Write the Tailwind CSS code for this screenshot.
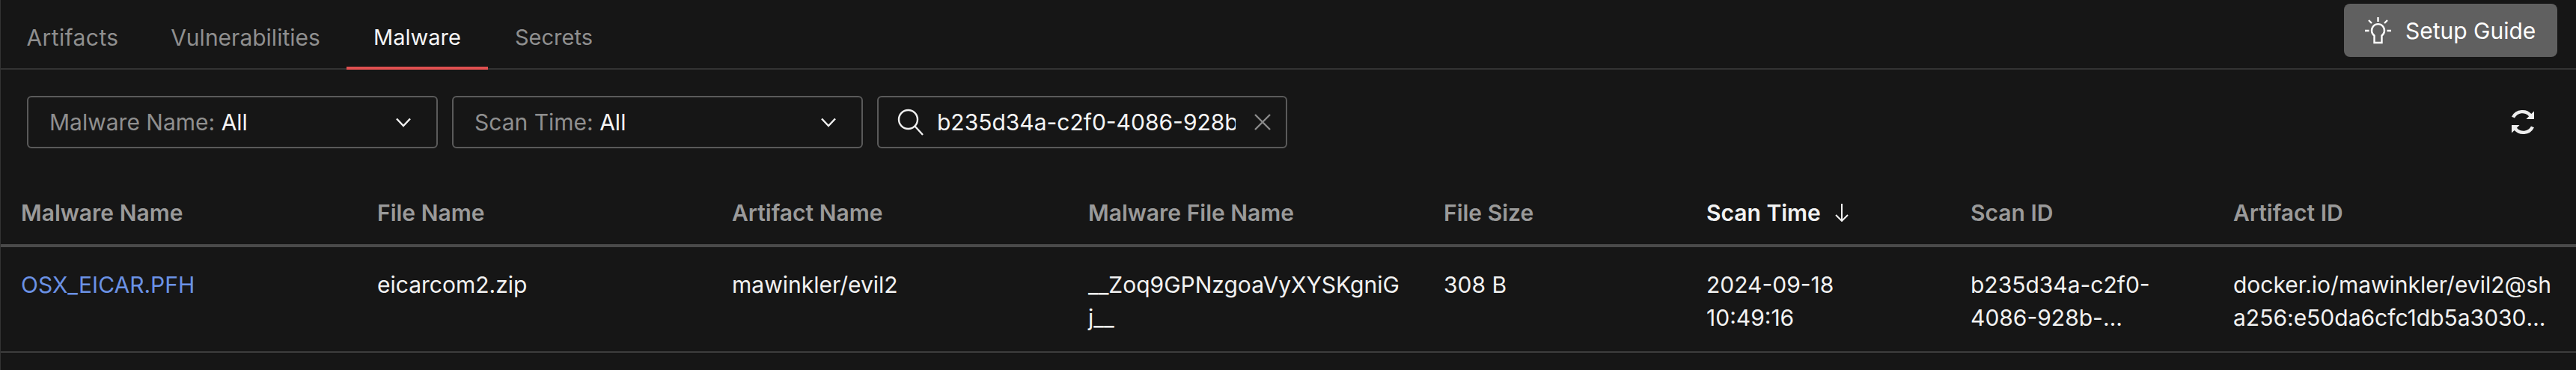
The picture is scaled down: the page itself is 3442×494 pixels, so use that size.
<!DOCTYPE html>
<html lang="en">
<head>
  <meta charset="UTF-8" />
  <title>Malware</title>
  <script src="https://cdn.jsdelivr.net/npm/@tailwindcss/browser@4"></script>
</head>
<body class="bg-[#161616] text-[#f2f2f2] font-['Inter',sans-serif] text-[30px] leading-[44px] overflow-hidden">
  <div class="h-[494px] border-l border-l-[#333]">

    <!-- Tabs -->
    <div class="flex items-start justify-between h-[93px] border-b-2 border-[#333]">
      <div class="flex h-[93px] text-[#8f8f8f] text-center">
        <a class="w-[192px] pt-[28px] tracking-[0.4px]">Artifacts</a>
        <a class="w-[270px] pt-[28px]">Vulnerabilities</a>
        <a class="w-[189px] pt-[28px] text-[29px] text-[#f5f5f5] border-b-4 border-[#e05050]">Malware</a>
        <a class="w-[178px] pl-[36px] pt-[28px] text-[29px] text-left">Secrets</a>
      </div>
      <button class="flex items-center gap-[19px] mt-[5px] mr-[25px] w-[285px] h-[71px] pl-[28px] bg-[#606060] rounded-lg text-white">
        <svg class="w-[35px] h-[36px]" viewBox="0 0 35 36" fill="none" stroke="currentColor" stroke-width="2.4">
          <path d="M17.5 0v6M5 4l4 4M30 4l-4 4M0 18h5.500M29.500 18H35" />
          <path d="M12.500 29v-4.500a8.500 8.500 0 1 1 10 0V29v5h-10z" />
        </svg>
        Setup Guide
      </button>
    </div>

    <!-- Filters -->
    <div class="flex items-center gap-[19px] h-[140px] pl-[35px] pr-[55px]">
      <div class="flex items-center justify-between w-[549px] h-[70px] pl-[28px] pr-[34px] border-2 border-[#5a5a5a] rounded-md">
        <span class="text-[#8f8f8f]">Malware Name: <span class="text-[#f5f5f5]">All</span></span>
        <svg class="w-[20px] h-[13px]" viewBox="0 0 20 13" fill="none" stroke="#f0f0f0" stroke-width="2.500"><path d="M1 1.500l9 9.500 9-9.500" /></svg>
      </div>
      <div class="flex items-center justify-between w-[549px] h-[70px] pl-[28px] pr-[34px] border-2 border-[#5a5a5a] rounded-md">
        <span class="text-[#8f8f8f]">Scan Time: <span class="text-[#f5f5f5]">All</span></span>
        <svg class="w-[20px] h-[13px]" viewBox="0 0 20 13" fill="none" stroke="#f0f0f0" stroke-width="2.500"><path d="M1 1.500l9 9.500 9-9.500" /></svg>
      </div>
      <div class="flex items-center w-[548px] h-[70px] pl-[25px] border-2 border-[#5a5a5a] rounded-md">
        <svg class="w-[36px] h-[36px] shrink-0" viewBox="0 0 36 36" fill="none" stroke="#f0f0f0" stroke-width="2.400">
          <circle cx="14.500" cy="14.500" r="12.500" /><path d="M23.500 23.500L34 35" />
        </svg>
        <input class="w-[399px] ml-[17px] outline-none bg-transparent text-[#f5f5f5]" value="b235d34a-c2f0-4086-928b-a1c7e9d03f52" />
        <svg class="w-[22px] h-[22px] ml-[25px] shrink-0" viewBox="0 0 22 22" fill="none" stroke="#8a8a8a" stroke-width="2.400"><path d="M1 1l20 20M21 1L1 21" /></svg>
      </div>
      <svg class="ml-auto w-[32px] h-[32px]" viewBox="0 0 32 32" fill="#eeeeee">
        <path d="M16 0c4.500 0 8.500 1.900 11.300 5L31 1.500V12H20.500l3.600-3.700A11.500 11.500 0 0 0 5 10.500L1 8.700A16 16 0 0 1 16 0z" />
        <path d="M16 32c-4.500 0-8.500-1.900-11.300-5L1 30.500V20h10.500l-3.600 3.700A11.500 11.500 0 0 0 27 21.500l4 1.800A16 16 0 0 1 16 32z" />
      </svg>
    </div>

    <!-- Table -->
    <table class="table-fixed w-full border-collapse">
      <colgroup>
        <col class="w-[476px]" /><col class="w-[474px]" /><col class="w-[476px]" /><col class="w-[475px]" />
        <col class="w-[351px]" /><col class="w-[353px]" /><col class="w-[351px]" /><col />
      </colgroup>
      <thead>
        <tr class="h-[95px] border-b-4 border-[#4a4a4a] text-left text-[#9a9a9a]">
          <th class="pl-[27px] pt-[8px] font-semibold">Malware Name</th>
          <th class="pl-[27px] pt-[8px] font-semibold">File Name</th>
          <th class="pl-[27px] pt-[8px] font-semibold">Artifact Name</th>
          <th class="pl-[27px] pt-[8px] font-semibold">Malware File Name</th>
          <th class="pl-[27px] pt-[8px] font-semibold">File Size</th>
          <th class="pl-[27px] pt-[8px] font-semibold text-[#f2f2f2]">
            <span class="flex items-center gap-[18px]">Scan Time
              <svg class="w-[20px] h-[24px]" viewBox="0 0 20 24" fill="none" stroke="#f2f2f2" stroke-width="2"><path d="M10 0v23M2 15l8 8 8-8" /></svg>
            </span>
          </th>
          <th class="pl-[27px] pt-[8px] font-semibold">Scan ID</th>
          <th class="pl-[27px] pt-[8px] font-semibold">Artifact ID</th>
        </tr>
      </thead>
      <tbody>
        <tr class="border-b-2 border-[#3d3d3d] align-top">
          <td class="px-[27px] pt-[28px] pb-[23px] text-[#6b92e5]">OSX_EICAR.PFH</td>
          <td class="px-[27px] pt-[28px] pb-[23px]">eicarcom2.zip</td>
          <td class="px-[27px] pt-[28px] pb-[23px]">mawinkler/evil2</td>
          <td class="px-[27px] pt-[28px] pb-[23px] break-all">__Zoq9GPNzgoaVyXYSKgniGj__</td>
          <td class="px-[27px] pt-[28px] pb-[23px]">308 B</td>
          <td class="px-[27px] pt-[28px] pb-[23px]">2024-09-18<br />10:49:16</td>
          <td class="px-[27px] pt-[28px] pb-[23px]"><div class="line-clamp-2">b235d34a-c2f0-4086-928b-a1c7e9d03f52</div></td>
          <td class="pl-[27px] pt-[28px] pb-[23px]">
            <div>docker.io/mawinkler/evil2@sh</div>
            <div class="w-[424px] truncate">a256:e50da6cfc1db5a30301f2c7ea8d94b6e</div>
          </td>
        </tr>
      </tbody>
    </table>
  </div>
</body>
</html>
